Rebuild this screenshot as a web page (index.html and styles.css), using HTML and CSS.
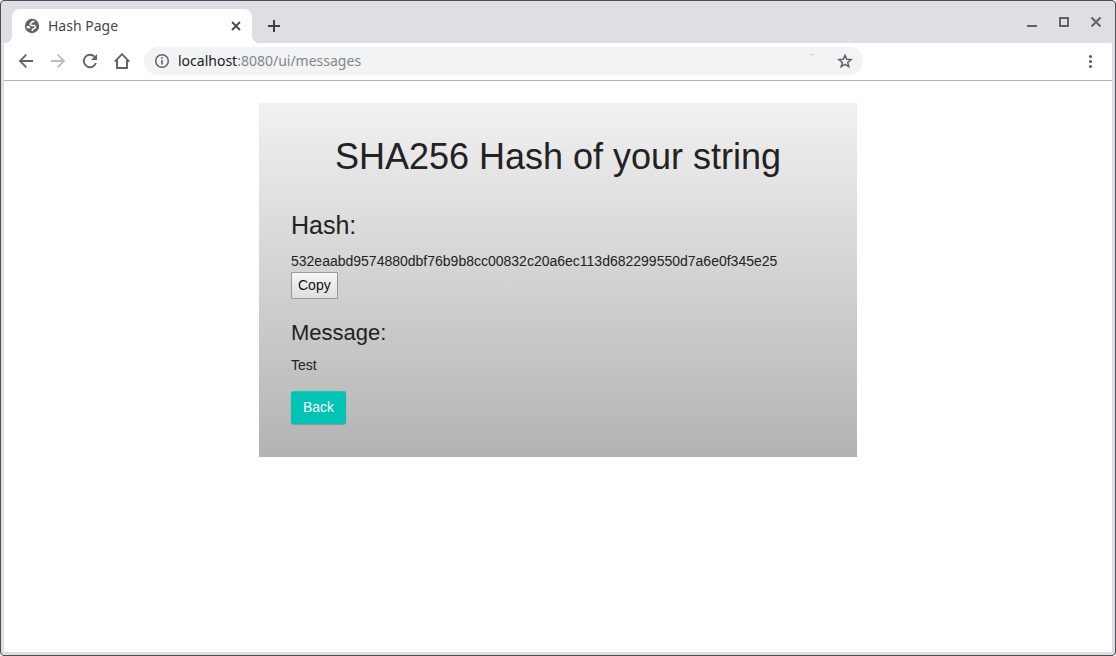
FILE: index.html
```html
<!DOCTYPE html>
<html lang="en">
<head>
<meta charset="utf-8">
<title>Hash Page</title>
<link rel="stylesheet" href="styles.css">
</head>
<body>
<div class="window">
  <header class="tab-strip">
    <div class="tab">
      <svg class="tab-icon" width="16" height="16" viewBox="0 0 16 16" aria-hidden="true">
        <circle cx="8" cy="8" r="7.200" fill="#5f6368"/>
        <path d="M10.500 3.500 8.500 3.600 7 5 6.200 6.500 7.500 7.500h2.800l1.200 1.200-.7 1.600-1.800.9-1.300 1.600" stroke="#fff" stroke-width="1.500" fill="none"/>
        <path d="M2.300 8H5l1.500 1.300-.6 1.200-2.800-.3z" fill="#fff"/>
      </svg>
      <span class="tab-title">Hash Page</span>
      <button class="icon-button tab-close" aria-label="Close tab">
        <svg width="16" height="16" viewBox="0 0 16 16"><path d="m4 4 8 8m0-8-8 8" stroke="#45484c" stroke-width="1.800" fill="none"/></svg>
      </button>
    </div>
    <button class="icon-button new-tab" aria-label="New tab">
      <svg width="16" height="16" viewBox="0 0 16 16"><path d="M8 2v12M2 8h12" stroke="#3c4043" stroke-width="2" fill="none"/></svg>
    </button>
    <div class="window-controls">
      <button class="icon-button" aria-label="Minimize"><svg width="16" height="16" viewBox="0 0 16 16"><path d="M3 12h10" stroke="#5f6368" stroke-width="2"/></svg></button>
      <button class="icon-button" aria-label="Maximize"><svg width="16" height="16" viewBox="0 0 16 16"><path d="M4 4h8v8H4z" stroke="#5f6368" stroke-width="2" fill="none"/></svg></button>
      <button class="icon-button" aria-label="Close"><svg width="16" height="16" viewBox="0 0 16 16"><path d="m3.500 3.500 9 9m0-9-9 9" stroke="#5f6368" stroke-width="2" fill="none"/></svg></button>
    </div>
  </header>
  <nav class="toolbar" aria-label="Navigation">
    <button class="icon-button" aria-label="Go back"><svg width="16" height="16" viewBox="0 0 16 16"><path d="M15 8H2.500M8.300 1.700 2 8l6.300 6.300" stroke="#5f6368" stroke-width="1.800" fill="none"/></svg></button>
    <button class="icon-button" aria-label="Go forward" disabled><svg width="16" height="16" viewBox="0 0 16 16"><path d="M1 8h12.500M7.700 1.700 14 8l-6.300 6.300" stroke="#babcbe" stroke-width="1.800" fill="none"/></svg></button>
    <button class="icon-button" aria-label="Reload"><svg width="16" height="16" viewBox="0 0 16 16"><path d="M13.900 10A6.200 6.200 0 1 1 12.500 3.700" stroke="#5f6368" stroke-width="1.900" fill="none"/><path d="M15 1v6H9z" fill="#5f6368"/></svg></button>
    <button class="icon-button" aria-label="Home"><svg width="16" height="16" viewBox="0 0 16 16"><path d="M0.800 8.600 8 1.200l7.200 7.400M3 7v8h10V7" stroke="#5f6368" stroke-width="1.900" fill="none"/></svg></button>
    <div class="address-bar">
      <svg width="16" height="16" viewBox="0 0 16 16" aria-hidden="true"><circle cx="8" cy="8" r="6.300" stroke="#5f6368" stroke-width="1.500" fill="none"/><path d="M8 7v4.500M8 4.300v1.700" stroke="#5f6368" stroke-width="1.600"/></svg>
      <span class="address"><span class="host">localhost</span>:8080/ui/messages</span>
      <span class="address-mark"></span>
      <button class="icon-button" aria-label="Bookmark this page"><svg width="16" height="16" viewBox="0 0 16 16"><path d="m8 2.300 1.700 4 4.300.3-3.300 2.800 1.100 4.200L8 11.300l-3.800 2.300 1.100-4.200L2 6.600l4.300-.3z" stroke="#5f6368" stroke-width="1.500" fill="none"/></svg></button>
    </div>
    <button class="icon-button menu-button" aria-label="Menu"><svg width="16" height="16" viewBox="0 0 16 16" fill="#5f6368"><circle cx="8.500" cy="3.500" r="1.600"/><circle cx="8.500" cy="8.500" r="1.600"/><circle cx="8.500" cy="13.500" r="1.600"/></svg></button>
  </nav>
  <main class="page">
    <section class="card">
      <h1 class="title">SHA256 Hash of your string</h1>
      <h2 class="hash-heading">Hash:</h2>
      <p class="value">532eaabd9574880dbf76b9b8cc00832c20a6ec113d682299550d7a6e0f345e25</p>
      <button class="copy-button">Copy</button>
      <h3 class="message-heading">Message:</h3>
      <p class="value">Test</p>
      <a class="back-button" href="#">Back</a>
    </section>
  </main>
</div>
</body>
</html>
```

FILE: styles.css
```css
* {
  box-sizing: border-box;
}

html {
  background: #fff;
}

body {
  margin: 0;
  font-family: "Liberation Sans", Arial, sans-serif;
  color: #222;
}

h1, h2, h3, p {
  margin: 0;
  font-weight: 400;
}

button {
  font-family: inherit;
}

.window {
  display: flex;
  flex-direction: column;
  min-height: 100vh;
  padding: 0 3px 3px;
  border: 1px solid #504e52;
  border-radius: 4px;
  background: #dedfe5;
}

.icon-button {
  display: flex;
  flex: none;
  padding: 0;
  border: 0;
  background: none;
}

.tab-strip {
  display: flex;
  align-items: center;
  height: 42px;
  padding: 8px 8px 0;
  font-family: "Noto Sans", sans-serif;
}

.tab {
  position: relative;
  display: flex;
  align-items: center;
  gap: 8px;
  width: 240px;
  height: 34px;
  padding: 0 8px 0 12px;
  border-radius: 8px 8px 0 0;
  background: #fff;
  color: #45484c;
  font-size: 14px;
}

.tab::before,
.tab::after {
  content: "";
  position: absolute;
  bottom: 0;
  width: 8px;
  height: 8px;
}

.tab::before {
  right: 100%;
  background: radial-gradient(circle at 0 0, transparent 8px, #fff 8px);
}

.tab::after {
  left: 100%;
  background: radial-gradient(circle at 100% 0, transparent 8px, #fff 8px);
}

.tab-title {
  flex: 1;
  padding-bottom: 2px;
}

.new-tab {
  margin-left: 14px;
}

.window-controls {
  display: flex;
  gap: 16px;
  margin: 0 0 8px auto;
}

.toolbar {
  display: flex;
  align-items: center;
  gap: 16px;
  height: 38px;
  padding: 0 14px 1px;
  border-bottom: 1px solid #b4b4b6;
  background: #fff;
  font-family: "Noto Sans", sans-serif;
}

.address-bar {
  display: flex;
  flex: 0 1 719px;
  align-items: center;
  gap: 8px;
  min-width: 0;
  height: 28px;
  margin-left: -2px;
  padding: 0 10px;
  border-radius: 14px;
  background: #f1f3f4;
  color: #80868b;
  font-size: 14px;
}

.address {
  flex: 1;
  padding-bottom: 2px;
}

.host {
  color: #202124;
}

.address-mark {
  width: 4px;
  height: 1px;
  margin: 0 15px 13px 0;
  background: #c9cbcc;
}

.menu-button {
  margin-left: auto;
}

.page {
  flex: 1;
  padding: 22px 16px;
  background: #fff;
}

.card {
  max-width: 598px;
  margin: 0 auto;
  padding: 32px 32px 33px;
  background: linear-gradient(#f1f1f1, #b3b3b3);
}

.title {
  margin-bottom: 28px;
  font-size: 36px;
  line-height: 44px;
  text-align: center;
}

.hash-heading {
  margin-bottom: 9px;
  font-size: 25px;
  line-height: 36px;
}

.value {
  font-size: 14px;
  line-height: 18px;
  overflow-wrap: anywhere;
}

.copy-button {
  display: block;
  height: 27px;
  margin: 2px 0 20px;
  padding: 0 6px 2px;
  border: 1px solid #999;
  border-radius: 1px;
  background: linear-gradient(#f6f6f6, #dedede);
  color: #111;
  font-size: 14px;
}

.message-heading {
  margin-bottom: 9px;
  font-size: 22px;
  line-height: 28px;
}

.back-button {
  display: inline-block;
  margin-top: 17px;
  padding: 0 12px;
  border-radius: 3px;
  background: #00c4b3;
  box-shadow: inset 0 1px #20cbbc, 0 1px 1px #0003;
  color: #fff;
  font-size: 14px;
  line-height: 33px;
  text-decoration: none;
  vertical-align: top;
}
```
